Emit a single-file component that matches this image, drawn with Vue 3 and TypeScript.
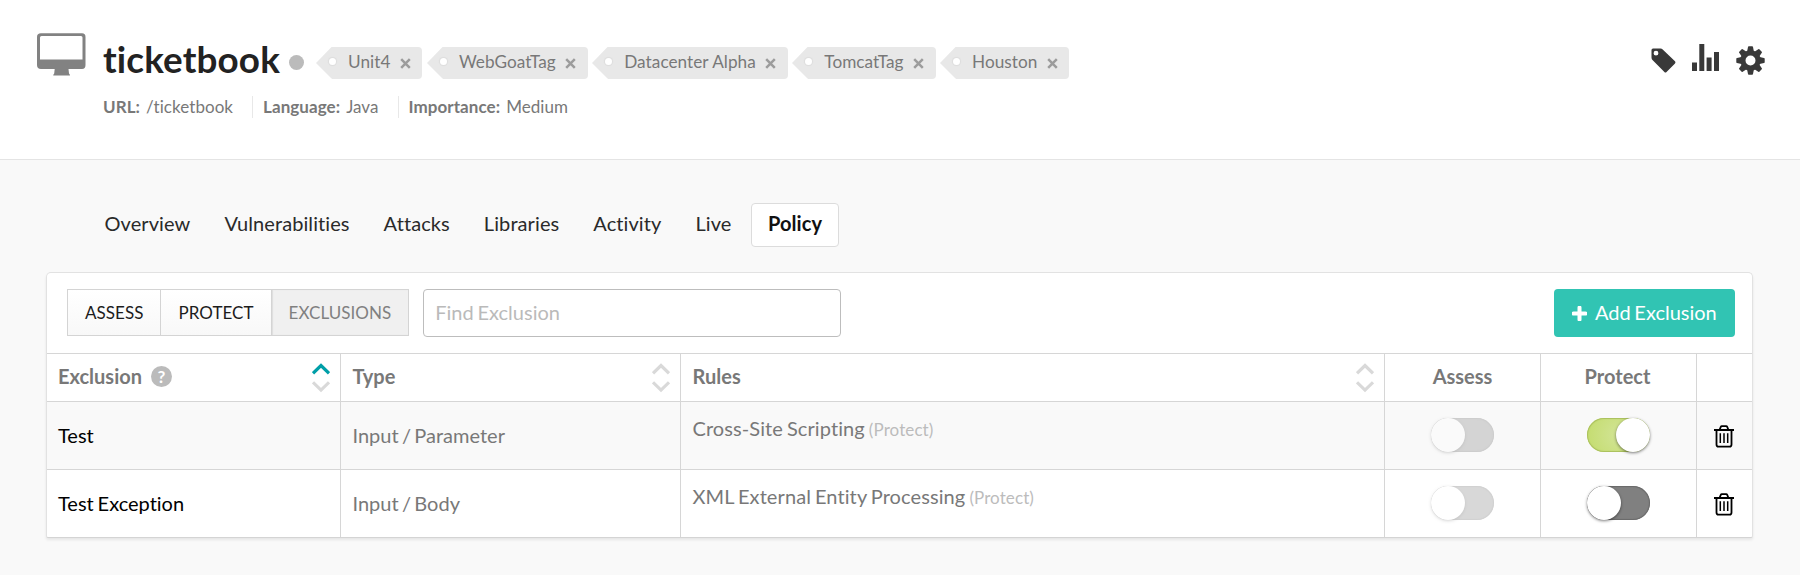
<script setup lang="ts">
import { ref } from 'vue'

interface Exclusion {
  name: string
  type: string
  rule: string
  scope: string
  protect: boolean
}

const tags = ref<string[]>(['Unit4', 'WebGoatTag', 'Datacenter Alpha', 'TomcatTag', 'Houston'])
const meta = [
  { label: 'URL:', value: '/ticketbook' },
  { label: 'Language:', value: 'Java' },
  { label: 'Importance:', value: 'Medium' },
]
const tabs = ['Overview', 'Vulnerabilities', 'Attacks', 'Libraries', 'Activity', 'Live', 'Policy']
const activeTab = ref('Policy')
const modes = ['ASSESS', 'PROTECT', 'EXCLUSIONS']
const activeMode = ref('EXCLUSIONS')
const query = ref('')
const rows = ref<Exclusion[]>([
  { name: 'Test', type: 'Input / Parameter', rule: 'Cross-Site Scripting', scope: '(Protect)', protect: true },
  { name: 'Test Exception', type: 'Input / Body', rule: 'XML External Entity Processing', scope: '(Protect)', protect: false },
])
const columns = [
  { title: 'Exclusion', help: true, sorted: true },
  { title: 'Type', help: false, sorted: false },
  { title: 'Rules', help: false, sorted: false },
]

function removeTag(tag: string) {
  tags.value = tags.value.filter((t) => t !== tag)
}
</script>

<template>
  <div class="page">
    <header class="header">
      <svg class="monitor" width="49" height="43" viewBox="0 0 49 43">
        <path fill="#828282" fill-rule="evenodd" d="M4 0.300H45Q48.500 0.300 48.500 4V32Q48.500 36 45 36H31.500L32 40.500Q33 41.500 33 42.500H16.200Q16.200 41.500 17.200 40.500L17.700 36H4Q0 36 0 32V4Q0 0.300 4 0.300ZM4.500 3Q3 3 3 4.500V26.500H45.500V4.500Q45.500 3 44 3Z" />
      </svg>
      <div class="info">
        <div class="title-row">
          <h1>ticketbook</h1>
          <span class="status"></span>
          <ul class="tags">
            <li v-for="tag in tags" :key="tag" class="tag">
              <svg class="tip" width="17" height="32" viewBox="0 0 17 32">
                <path d="M17 0H15.500L0 16L15.500 31.500L17 32Z" fill="#e8e8e8" />
              </svg>
              <span class="tag-body">
                <i class="hole"></i>
                <span class="tag-text">{{ tag }}</span>
                <svg class="close" width="11" height="11" viewBox="0 0 11 11" @click="removeTag(tag)">
                  <path d="M1.200 1.200L9.800 9.800M9.800 1.200L1.200 9.800" stroke="#9c9c9c" stroke-width="2.500" />
                </svg>
              </span>
            </li>
          </ul>
        </div>
        <div class="meta">
          <span v-for="m in meta" :key="m.label" class="meta-item"><b>{{ m.label }}</b>{{ m.value }}</span>
        </div>
      </div>
      <div class="actions">
        <svg class="tag-icon" width="25" height="25" viewBox="0 0 25 25">
          <path fill="#393939" fill-rule="evenodd" d="M2 .5H9.500Q10.800 .5 11.700 1.400L24 13.300Q25 14.300 24 15.400L15.500 24Q14.500 25 13.400 24L1.500 12Q.5 11 .5 9.500V2Q.5 .5 2 .5ZM5 2.800A2.400 2.400 0 1 0 5 7.600A2.400 2.400 0 1 0 5 2.800Z" />
        </svg>
        <svg class="bars" width="27" height="27" viewBox="0 0 27 27">
          <path fill="#393939" d="M0 18.500H5V27H0ZM7.300 0H12.300V27H7.300ZM14.600 13.500H19.600V27H14.600ZM22 8H27V27H22Z" />
        </svg>
        <svg width="29" height="29" viewBox="-14.500 -14.500 29 29">
          <g fill="#393939">
            <path v-for="a in 8" :key="a" :transform="`rotate(${a * 45})`" d="M-3.400 -9L-2.500 -13.500Q-2.400 -14.200 -1.700 -14.200H1.700Q2.400 -14.200 2.500 -13.500L3.400 -9Z" />
          </g>
          <circle r="7.600" fill="none" stroke="#393939" stroke-width="5.200" />
        </svg>
      </div>
    </header>

    <nav class="tabs">
      <a v-for="tab in tabs" :key="tab" class="tab" :class="{ active: tab === activeTab }" @click="activeTab = tab">{{ tab }}</a>
    </nav>

    <section class="card">
      <div class="toolbar">
        <div class="modes">
          <button v-for="m in modes" :key="m" :class="{ active: m === activeMode }" @click="activeMode = m">{{ m }}</button>
        </div>
        <input v-model="query" class="search" placeholder="Find Exclusion" />
        <button class="add">
          <svg width="15" height="15" viewBox="0 0 15 15">
            <path d="M7.500 1.500V13.500M1.500 7.500H13.500" stroke="#fff" stroke-width="4" stroke-linecap="round" />
          </svg>
          <span>Add Exclusion</span>
        </button>
      </div>

      <div class="row head">
        <div v-for="c in columns" :key="c.title" class="cell">
          <span class="label">{{ c.title }}</span>
          <span v-if="c.help" class="help">?</span>
          <svg class="sort" width="18" height="30" viewBox="0 0 18 30">
            <path d="M1 10.300L9 2.500L17 10.300" fill="none" :stroke="c.sorted ? '#009fa8' : '#d9d9d9'" stroke-width="3.200" />
            <path d="M1 19.300L9 27.100L17 19.300" fill="none" stroke="#d9d9d9" stroke-width="3.200" />
          </svg>
        </div>
        <div class="cell center"><span class="label">Assess</span></div>
        <div class="cell center protect"><span class="label">Protect</span></div>
        <div class="cell"></div>
      </div>

      <div v-for="r in rows" :key="r.name" class="row item">
        <div class="cell name">{{ r.name }}</div>
        <div class="cell type">{{ r.type }}</div>
        <div class="cell rule">{{ r.rule }}<small>{{ r.scope }}</small></div>
        <div class="cell center"><span class="toggle disabled"><i></i></span></div>
        <div class="cell center">
          <span class="toggle" :class="{ on: r.protect }" @click="r.protect = !r.protect"><i></i></span>
        </div>
        <div class="cell center delete">
          <svg class="trash" width="20" height="23" viewBox="0 0 20 23">
            <path d="M0 5H20M5.500 5L6.800 1.900Q7.100 1.200 7.800 1.200H12.200Q12.900 1.200 13.200 1.900L14.500 5M2.500 5V19.500Q2.500 21.700 4.500 21.700H15.500Q17.500 21.700 17.500 19.500V5" fill="none" stroke="#000" stroke-width="1.800" />
            <path d="M6.300 8.300V18M10 8.300V18M13.700 8.300V18" fill="none" stroke="#000" stroke-width="1.500" />
          </svg>
        </div>
      </div>
    </section>
  </div>
</template>

<style>
body {
  margin: 0;
  background: #f9f9f9;
}
</style>

<style scoped>
.page {
  box-sizing: border-box;
  height: 575px;
  overflow: hidden;
  background: #f9f9f9;
  font-family: Lato, 'Open Sans', sans-serif;
  font-size: 20px;
  font-variant-ligatures: none;
  color: #787878;
}
.header {
  box-sizing: border-box;
  display: flex;
  align-items: flex-start;
  height: 160px;
  padding: 33px 35px 0 37px;
  background: #fff;
  border-bottom: 1.500px solid #e4e4e4;
}
.monitor {
  flex: none;
}
.info {
  flex: 1;
  margin-left: 17px;
}
.title-row {
  display: flex;
  align-items: center;
  height: 58px;
}
h1 {
  margin: 0;
  width: 178px;
  padding-bottom: 5px;
  font-size: 36.800px;
  line-height: 53px;
  letter-spacing: 0.150px;
  font-weight: 700;
  color: #222;
  white-space: nowrap;
}
.status {
  width: 15px;
  height: 15px;
  margin-left: 8px;
  border-radius: 50%;
  background: #bbb;
}
.tags {
  display: flex;
  gap: 4.500px;
  margin: 2px 0 0 12px;
  padding: 0;
  list-style: none;
}
.tag {
  display: flex;
  height: 32px;
}
.tag-body {
  display: flex;
  align-items: center;
  padding-right: 11.500px;
  margin-left: -1px;
  border-radius: 0 4px 4px 0;
  background: #e8e8e8;
  font-size: 17.200px;
  line-height: 30px;
  letter-spacing: 0.040px;
  white-space: nowrap;
}
.tag-text {
  padding-bottom: 2px;
}
.hole {
  width: 7px;
  height: 7px;
  margin: -4px 12px 0 -3px;
  border-radius: 50%;
  background: #fff;
  box-shadow: 0 0 1px 1px #dcdcdc;
}
.close {
  margin: 1px 0 0 9.500px;
}
.meta {
  display: flex;
  margin-top: 5px;
  font-size: 17px;
  line-height: 22px;
  letter-spacing: 0.060px;
}
.meta-item + .meta-item {
  margin-left: 19px;
  padding-left: 10px;
  border-left: 1.500px solid #e8e8e8;
}
.meta-item b {
  margin-right: 6px;
}
.actions {
  display: flex;
  align-items: center;
  gap: 17px;
  margin-top: 11px;
}
.tag-icon {
  margin-right: -1px;
}
.bars {
  margin-bottom: 5px;
}
.tabs {
  display: flex;
  align-items: center;
  gap: 34px;
  height: 44px;
  padding: 43px 0 0 104.500px;
  color: #2a2a2a;
  line-height: 38px;
  letter-spacing: 0.090px;
}
.tab {
  padding-bottom: 4px;
}
.tab.active {
  box-sizing: border-box;
  height: 44px;
  margin-left: -14.500px;
  padding: 0 16px;
  border: 1.500px solid #dcdcdc;
  border-radius: 4px;
  background: #fff;
  font-weight: 700;
  color: #111;
}
.card {
  box-sizing: border-box;
  width: 1707px;
  height: 266px;
  margin: 25px 0 0 46px;
  border: 1px solid #e2e2e2;
  border-bottom-color: #d4d4d4;
  border-radius: 5px 5px 2px 2px;
  background: #fff;
  box-shadow: 0 2px 3px rgba(0, 0, 0, 0.08);
}
.toolbar {
  box-sizing: border-box;
  display: flex;
  align-items: flex-start;
  height: 80px;
  padding: 16px 17px 0 20px;
}
button,
input {
  font-family: inherit;
  font-variant-ligatures: none;
}
.modes {
  display: flex;
}
.modes button {
  box-sizing: border-box;
  height: 47px;
  padding: 0 17px;
  border: 1px solid #d4d4d4;
  background: linear-gradient(#fff, #f8f8f8);
  font-size: 17px;
  letter-spacing: 0.040px;
  color: #1c1c1c;
}
.modes button + button {
  margin-left: -1px;
}
.modes button.active {
  background: #f0f0f0;
  color: #808080;
  box-shadow: inset 1px 0 1px #ddd;
}
.search {
  box-sizing: border-box;
  width: 417.500px;
  height: 48px;
  margin-left: 14px;
  padding: 0 11px 2px;
  border: 1px solid #bdbdbd;
  border-radius: 4px;
  font-size: 20px;
  word-spacing: -1.300px;
  outline: none;
}
.search::placeholder {
  color: #bababa;
}
.add {
  display: flex;
  align-items: center;
  gap: 8px;
  box-sizing: border-box;
  width: 181px;
  height: 48px;
  margin-left: auto;
  padding: 0 0 0 18px;
  border: 0;
  border-radius: 4px;
  background: #31c4b3;
  color: #fff;
  font-size: 20px;
  word-spacing: -1.500px;
  white-space: nowrap;
}
.add span {
  padding-bottom: 2px;
}
.row {
  box-sizing: border-box;
  display: grid;
  grid-template-columns: 293px 340px 704px 156px 156px 56px;
  height: 68px;
  border-top: 1px solid #d6d6d6;
}
.row.head {
  height: 48px;
  font-weight: 700;
}
.row.item:nth-child(3) {
  background: #f9f9f9;
}
.cell {
  display: flex;
  align-items: center;
  padding-left: 11px;
  word-spacing: -1.300px;
  white-space: nowrap;
}
.cell + .cell {
  padding-left: 11.500px;
  border-left: 1px solid #d6d6d6;
}
.cell + .cell.center {
  justify-content: center;
  padding-left: 0;
}
.cell + .cell.protect,
.cell + .cell.delete {
  padding-right: 2px;
}
.label {
  padding-bottom: 3px;
}
.help {
  width: 21px;
  height: 21px;
  margin: 0 0 2px 9px;
  border-radius: 50%;
  background: #bbb;
  color: #fff;
  font-size: 17px;
  line-height: 21px;
  text-align: center;
}
.sort {
  margin: 0 10px 0 auto;
}
.cell.name {
  padding-bottom: 1px;
  color: #000;
}
.cell.type {
  padding-bottom: 1px;
  word-spacing: -1.800px;
}
.cell.rule {
  align-items: baseline;
  padding-top: 14px;
  letter-spacing: 0.100px;
}
.rule small {
  margin-left: 4px;
  font-size: 17px;
  color: #bcbcbc;
}
.toggle {
  box-sizing: border-box;
  display: flex;
  width: 63px;
  height: 34px;
  margin-bottom: 2px;
  border-radius: 17px;
  background: #808080;
  box-shadow: inset 0 0 1px 1px #696969;
}
.toggle i {
  width: 34px;
  height: 34px;
  border-radius: 50%;
  background: #fff;
  box-shadow: 0 1px 3px rgba(0, 0, 0, 0.5);
}
.toggle.on {
  justify-content: flex-end;
  background: radial-gradient(circle at 50% 50%, #d2e496, #c3dc6c);
  box-shadow: inset 0 0 1px 1px #a9bf5b;
}
.toggle.disabled {
  opacity: 0.3;
}
.trash {
  margin-top: 1px;
}
</style>
